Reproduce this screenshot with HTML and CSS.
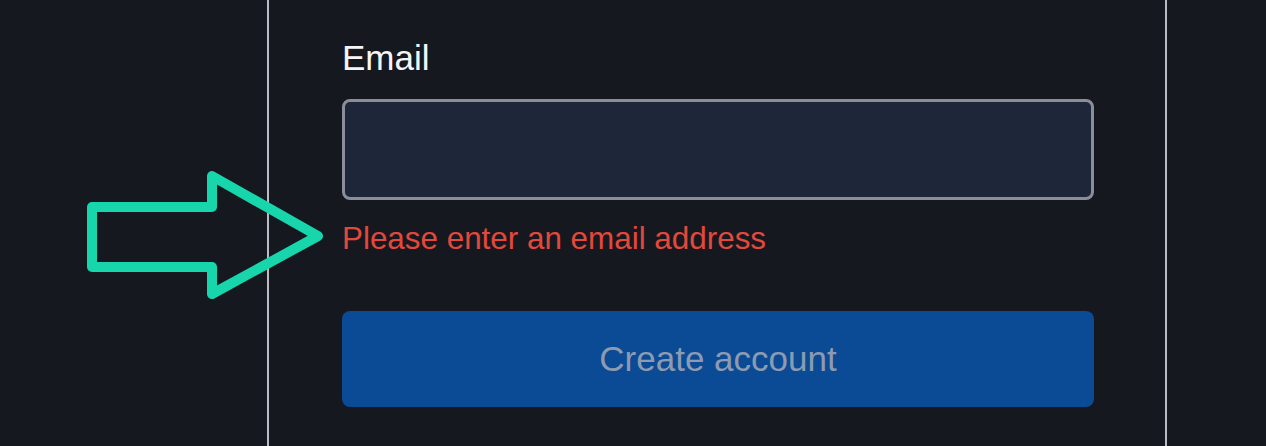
FILE: index.html
```html
<!doctype html>
<html lang="en">

<head>
    <meta charset="utf-8">
    <meta name="viewport" content="width=device-width, initial-scale=1.0">
    <title>create account</title>
    <link rel="stylesheet" href="styles.css">
</head>

<body>
    <div class="page">
        <form class="panel" novalidate>
            <label class="field-label" for="email">Email</label>
            <input class="field-input" id="email" type="email">
            <p class="field-error">Please enter an email address</p>
            <button class="submit-btn" type="submit" disabled>Create account</button>
        </form>

        <!-- callout arrow pointing at the error -->
        <svg class="callout-arrow" viewBox="0 0 250 140" width="250" height="140">
            <path d="M10 41 H130 V10 L236 70 L130 128 V101 H10 Z" fill="none" stroke="#17d6ab"
                stroke-width="10" stroke-linejoin="round" />
        </svg>
    </div>
</body>

</html>
```

FILE: styles.css
```css
/* base */

html,
body {
    margin: 0;
    height: 100%;
    background: #16181f;
}

body {
    font-family: "Liberation Sans", Arial, sans-serif;
}

.page {
    position: relative;
    display: flex;
    height: 100%;
    padding-left: 267px;
    box-sizing: border-box;
}

/* form column */

.panel {
    display: flex;
    flex-direction: column;
    width: 900px;
    margin: 0;
    padding: 38px 71px 0 73px;
    box-sizing: border-box;
    border-left: 2px solid #b9bcc4;
    border-right: 2px solid #b9bcc4;
}

.field-label {
    color: #f4f5f7;
    font-size: 35px;
    line-height: 40px;
}

.field-input {
    margin-top: 21px;
    height: 101px;
    box-sizing: border-box;
    background: #1e2739;
    border: 3px solid #8b8e98;
    border-radius: 8px;
    outline: none;
}

.field-error {
    margin: 21px 0 0;
    color: #e3483c;
    font-size: 31.4px;
    line-height: 36px;
}

.submit-btn {
    margin-top: 54px;
    height: 96px;
    border: 0;
    border-radius: 8px;
    background: #0b4a94;
    color: #8c9bb2;
    font-family: inherit;
    font-size: 35px;
}

/* overlay arrow */

.callout-arrow {
    position: absolute;
    left: 82px;
    top: 166px;
}
```
